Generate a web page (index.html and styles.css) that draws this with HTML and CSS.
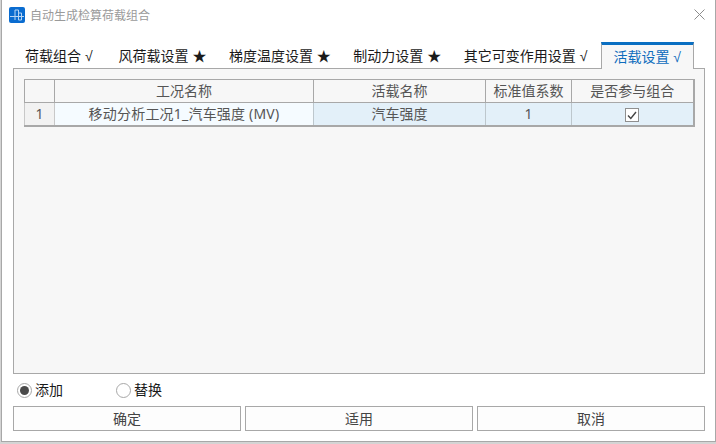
FILE: index.html
```html
<!DOCTYPE html>
<html lang="zh-CN">
<head>
    <meta charset="UTF-8">
    <meta name="viewport" content="width=device-width, initial-scale=1.0">
    <title>自动生成检算荷载组合</title>
    <link rel="stylesheet" href="styles.css">
</head>
<body>

    <div class="window">
        <!-- Title bar -->
        <header class="title-bar">
            <div class="title-left">
                <svg class="app-icon" width="16" height="16" viewBox="0 0 16 16">
                    <rect width="16" height="16" rx="2" fill="#0a6cd0"/>
                    <path d="M1 9.5H15M6 3V13M9.5 3V13M12.5 6V13M6 3H9.5M9.5 6H12.5M9.5 13H12.5" stroke="#b9d6f3" stroke-width="1" fill="none"/>
                </svg>
                <span class="title-text">自动生成检算荷载组合</span>
            </div>
            <svg class="close-icon" width="11" height="11" viewBox="0 0 11 11">
                <path d="M0.5 0.5L10.5 10.5M10.5 0.5L0.5 10.5" stroke="#8c8c8c" stroke-width="1" fill="none"/>
            </svg>
        </header>

        <!-- Tabs -->
        <nav class="tabs">
            <div class="tab first">荷载组合 √</div>
            <div class="tab star">风荷载设置 ★</div>
            <div class="tab star">梯度温度设置 ★</div>
            <div class="tab star">制动力设置 ★</div>
            <div class="tab">其它可变作用设置 √</div>
            <div class="tab active">活载设置 √</div>
        </nav>

        <!-- Tab content -->
        <section class="panel">
            <table class="grid">
                <colgroup>
                    <col class="col-index">
                    <col class="col-case">
                    <col class="col-load">
                    <col class="col-factor">
                    <col class="col-join">
                </colgroup>
                <thead>
                    <tr>
                        <th></th>
                        <th>工况名称</th>
                        <th>活载名称</th>
                        <th>标准值系数</th>
                        <th>是否参与组合</th>
                    </tr>
                </thead>
                <tbody>
                    <tr>
                        <td class="row-index">1</td>
                        <td class="cell-case">移动分析工况1_汽车强度 (MV)</td>
                        <td>汽车强度</td>
                        <td>1</td>
                        <td>
                            <span class="checkbox">
                                <svg width="10" height="9" viewBox="0 0 10 9">
                                    <path d="M1 4.5L3.8 7.5L9 1" stroke="#444" stroke-width="1.4" fill="none"/>
                                </svg>
                            </span>
                        </td>
                    </tr>
                </tbody>
            </table>
        </section>

        <!-- Add / replace -->
        <div class="radio-row">
            <label class="radio-item">
                <span class="radio checked"></span>添加
            </label>
            <label class="radio-item">
                <span class="radio"></span>替换
            </label>
        </div>

        <!-- Buttons -->
        <div class="button-row">
            <button class="btn">确定</button>
            <button class="btn">适用</button>
            <button class="btn">取消</button>
        </div>
    </div>

</body>
</html>
```

FILE: styles.css
```css
* {
    margin: 0;
    padding: 0;
    box-sizing: border-box;
}

html, body {
    width: 716px;
    height: 444px;
    overflow: hidden;
}

body {
    background-color: #d4d4d4;
    font-family: "Liberation Sans", "Noto Sans CJK SC", sans-serif;
    font-size: 14px;
    color: #1a1a1a;
}

.window {
    width: 715px;
    height: 442px;
    margin-left: 1px;
    padding: 0 10px 0 11px;
    background-color: #fff;
    border-left: 1px solid #a8a8a8;
    border-right: 1px solid #a8a8a8;
    border-bottom: 1px solid #a8a8a8;
    display: flex;
    flex-direction: column;
}

.title-bar {
    height: 42px;
    padding-top: 6px;
    display: flex;
    justify-content: space-between;
    align-items: flex-start;
}

.title-left {
    display: flex;
    align-items: center;
    margin-left: -4px;
}

.app-icon {
    margin-right: 5px;
}

.title-text {
    font-size: 12px;
    color: #9a9a9a;
}

.close-icon {
    margin-top: 3px;
}

.tabs {
    height: 27px;
    display: flex;
    position: relative;
    z-index: 1;
}

.tab {
    padding: 0 12px;
    line-height: 28px;
    white-space: nowrap;
    color: #1a1a1a;
}

.tab.first {
    margin-right: 2px;
}

.tab.star {
    padding-right: 10.5px;
}

.tab.active {
    margin-left: auto;
    margin-right: 11px;
    padding: 0 12px 0 11px;
    height: 27px;
    background-color: #f7f7f7;
    color: #0f6cbd;
    border-top: 3px solid #0a6fc2;
    border-left: 1px solid #a8a8a8;
    border-right: 1px solid #a8a8a8;
    line-height: 25px;
}

.panel {
    height: 306px;
    margin-top: -1px;
    padding: 10px 10px 0 10px;
    background-color: #f7f7f7;
    border: 1px solid #a8a8a8;
}

.grid {
    width: 670px;
    border-collapse: collapse;
    table-layout: fixed;
    color: #555;
    border: 2px solid #a8a8a8;
    border-top-width: 1px;
    border-left-width: 1px;
    font-family: "Noto Sans", "Noto Sans CJK SC", sans-serif;
    line-height: 20px;
}

.col-index { width: 30px; }
.col-case { width: 259px; }
.col-load { width: 172px; }
.col-factor { width: 86px; }
.col-join { width: 122px; }

.grid th {
    height: 23px;
    font-weight: normal;
    background-color: #f7f7f7;
    border: 1px solid #a8a8a8;
}

.grid td {
    height: 23px;
    text-align: center;
    background-color: #e3f0f9;
    border: 1px solid #bdc7cd;
    border-top-color: #a8a8a8;
}

.grid td.row-index {
    background-color: #f2f2f2;
    border-color: #c8c8c8;
    border-top-color: #a8a8a8;
}

.grid td.cell-case {
    background-color: #f5fbff;
    letter-spacing: 0.2px;
}

.checkbox {
    width: 14px;
    height: 14px;
    background-color: #fff;
    border: 1px solid #8f8f8f;
    display: inline-flex;
    align-items: center;
    justify-content: center;
    vertical-align: middle;
}

.radio-row {
    height: 32px;
    padding: 0 0 2px 4px;
    display: flex;
    align-items: center;
    gap: 53px;
}

.radio-item {
    display: flex;
    align-items: center;
    gap: 3px;
}

.radio {
    width: 15px;
    height: 15px;
    margin-top: 2px;
    border: 1px solid #a8a8a8;
    border-radius: 50%;
    background-color: #fff;
    display: inline-flex;
    align-items: center;
    justify-content: center;
}

.radio.checked::after {
    content: "";
    width: 9px;
    height: 9px;
    border-radius: 50%;
    background-color: #4a4a4a;
}

.button-row {
    display: flex;
    gap: 4px;
}

.btn {
    flex: 1;
    height: 25px;
    padding-bottom: 2px;
    background-color: #fdfdfd;
    border: 1px solid #a8a8a8;
    font-family: inherit;
    font-size: 14px;
    color: #444;
}
```
